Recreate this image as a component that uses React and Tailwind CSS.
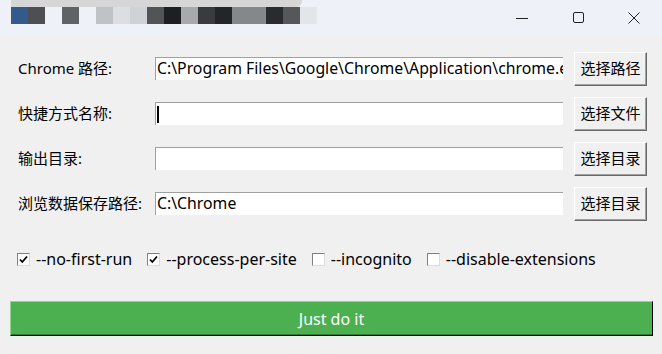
import React from "react";

const titleBlocks = [
  "bg-[#345a8c]", "bg-[#4d4f52]", "bg-[#eef2f8]", "bg-[#5f6366]", "bg-[#eef2f8]", "bg-[#bfc2c6]",
  "bg-[#dcdee2]", "bg-[#cfd2d6]", "bg-[#535456]", "bg-[#1e1f21]", "bg-[#a7a9ab]", "bg-[#3a3b3d]",
  "bg-[#242527]", "bg-[#85888a]", "bg-[#85888a]", "bg-[#2a2b2e]", "bg-[#56575b]", "bg-[#e2e5e9]",
];

const rows = [
  { label: "Chrome 路径:", value: "C:\\Program Files\\Google\\Chrome\\Application\\chrome.exe", button: "选择路径" },
  { label: "快捷方式名称:", value: "", button: "选择文件", caret: true },
  { label: "输出目录:", value: "", button: "选择目录" },
  { label: "浏览数据保存路径:", value: "C:\\Chrome", button: "选择目录" },
];

const flags = [
  { name: "--no-first-run", checked: true },
  { name: "--process-per-site", checked: true },
  { name: "--incognito", checked: false },
  { name: "--disable-extensions", checked: false },
];

const Checkbox = ({ checked }) => (
  <span className="w-[13px] h-[13px] bg-white border-t border-l border-[#808080] border-r border-b border-r-[#dcdcdc] border-b-[#dcdcdc] flex items-center justify-center shrink-0">
    {checked && (
      <svg width="9" height="9" viewBox="0 0 9 9">
        <path d="M1 4.5 L3.3 7 L8 1.5" fill="none" stroke="#000" strokeWidth="1.8" />
      </svg>
    )}
  </span>
);

const App = () => {
  return (
    <div className="w-[662px] h-[354px] bg-[#f0f0f0] overflow-hidden text-[15px] text-black font-['Noto_Sans','Noto_Sans_CJK_SC',sans-serif]">
      {/* Title bar */}
      <div className="h-[35px] bg-[#eef2f8] flex">
        <div className="flex flex-col pl-[11px]">
          <div className="h-[7px] w-[291px] bg-[#d6d6d6] rounded-br-[6px]" />
          <div className="flex">
            {titleBlocks.map((c, i) => (
              <div key={i} className={`w-[17px] h-[17px] ${c}`} />
            ))}
          </div>
        </div>
        <div className="ml-auto flex items-center">
          <div className="w-[56px] flex justify-center">
            <svg width="12" height="12" viewBox="0 0 12 12">
              <path d="M0 6.5 H12" stroke="#222" strokeWidth="1" />
            </svg>
          </div>
          <div className="w-[56px] flex justify-center">
            <svg width="11" height="11" viewBox="0 0 11 11">
              <rect x="0.5" y="0.5" width="10" height="10" rx="1.5" fill="none" stroke="#222" strokeWidth="1" />
            </svg>
          </div>
          <div className="w-[56px] flex justify-center">
            <svg width="12" height="12" viewBox="0 0 12 12">
              <path d="M0.5 0.5 L11.5 11.5 M11.5 0.5 L0.5 11.5" stroke="#222" strokeWidth="1" />
            </svg>
          </div>
        </div>
      </div>

      {/* Form rows */}
      <div className="pt-[11px] pl-[18px]">
        {rows.map((r, i) => (
          <div key={i} className="h-[45px] flex items-center">
            <div className="w-[137px] leading-none whitespace-nowrap">{r.label}</div>
            <div className="w-[408px] h-[23px] bg-white border-t border-l border-[#a0a0a0] flex items-center pl-[1px] overflow-hidden whitespace-nowrap leading-none text-[15.8px]">
              {r.caret && <span className="w-[2px] h-[17px] bg-black" />}
              {r.value}
            </div>
            <button className="ml-[11px] w-[73px] h-[34px] bg-[#f0f0f0] border border-t-white border-l-white border-r-[#696969] border-b-[#696969] shadow-[inset_-1px_-1px_0_#a0a0a0] text-[15px] leading-none flex items-center justify-center">
              {r.button}
            </button>
          </div>
        ))}
      </div>

      {/* Flags */}
      <div className="mt-[23px] h-[20px] pl-[17px] flex items-center text-[16px]">
        {flags.map((f, i) => (
          <label key={i} className="flex items-center mr-[15px]">
            <Checkbox checked={f.checked} />
            <span className="ml-[6px] leading-none whitespace-nowrap">{f.name}</span>
          </label>
        ))}
      </div>

      {/* Action */}
      <div className="mt-[32px] pl-[10px]">
        <button className="w-[643px] h-[35px] bg-[#4caf50] border-t border-l border-t-[#8fd88f] border-l-[#8fd88f] border-b border-r border-b-black border-r-black shadow-[inset_0_-1px_0_#2e7d32] text-white text-[16px] flex items-center justify-center leading-none">
          Just do it
        </button>
      </div>
    </div>
  );
};

export default App;
